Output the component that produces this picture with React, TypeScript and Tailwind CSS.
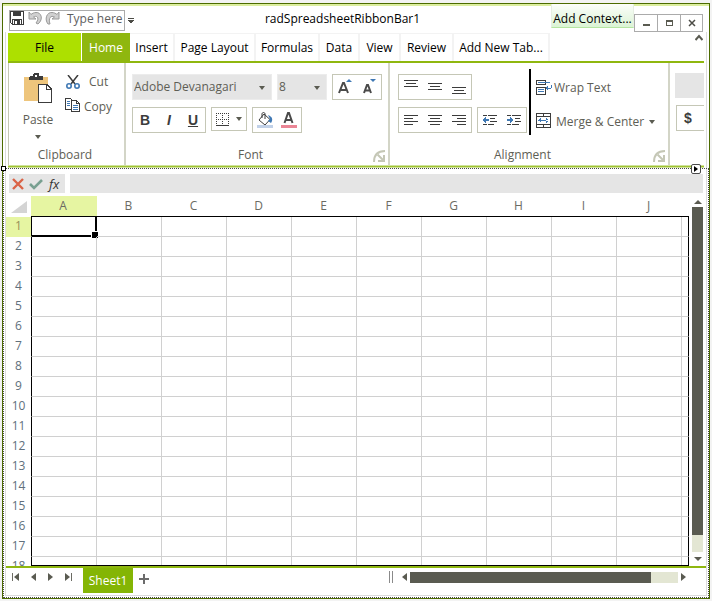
import React from "react";

const COLUMNS = ["A", "B", "C", "D", "E", "F", "G", "H", "I", "J"];
const ROWS = Array.from({ length: 18 }, (_, i) => i + 1);

const TABS = [
  { label: "Insert", width: "w-[45px]" },
  { label: "Page Layout", width: "w-[81px]" },
  { label: "Formulas", width: "w-[64px]" },
  { label: "Data", width: "w-[40px]" },
  { label: "View", width: "w-[41px]" },
  { label: "Review", width: "w-[53px]" },
  { label: "Add New Tab...", width: "w-[96px]" },
];

type ArrowProps = { dir: "up" | "down" | "left" | "right"; size?: "sm" | "md" };

function Arrow({ dir, size = "sm" }: ArrowProps) {
  if (dir === "down" || dir === "up") {
    const w = size === "sm" ? 6 : 8;
    const h = 4;
    const d = dir === "down" ? `M0 0H${w}L${w / 2} ${h}Z` : `M0 ${h}H${w}L${w / 2} 0Z`;
    return (
      <svg width={w} height={h} className="shrink-0" aria-hidden="true">
        <path d={d} fill="#5a5b51" />
      </svg>
    );
  }
  const d = dir === "right" ? "M0 0L5 4L0 8Z" : "M5 0L0 4L5 8Z";
  return (
    <svg width="5" height="8" className="shrink-0" aria-hidden="true">
      <path d={d} fill="#5a5b51" />
    </svg>
  );
}

type LinesProps = { rows: [number, number, number][] };

function Lines({ rows }: LinesProps) {
  return (
    <svg width="14" height="16" shapeRendering="crispEdges" aria-hidden="true">
      {rows.map(([x, y, w]) => (
        <rect key={y} x={x} y={y} width={w} height="1" fill="#3c3c3c" />
      ))}
    </svg>
  );
}

function IconButton({ label, children }: { label: string; children: React.ReactNode }) {
  return (
    <button type="button" aria-label={label} className="flex w-6 items-center justify-center">
      {children}
    </button>
  );
}

function ButtonBox({ children }: { children: React.ReactNode }) {
  return <div className="flex h-[26px] border border-[#c5c7b6] bg-white">{children}</div>;
}

function Combo({ label, value, width }: { label: string; value: string; width: string }) {
  return (
    <div className={`relative h-[26px] ${width}`}>
      <select
        aria-label={label}
        className="h-full w-full appearance-none border border-[#ececec] bg-[#e5e5e5] pl-px text-xs text-[#5e5e55]"
        defaultValue={value}
      >
        <option>{value}</option>
      </select>
      <span className="pointer-events-none absolute right-[7px] top-3">
        <Arrow dir="down" />
      </span>
    </div>
  );
}

function Group({
  title,
  width,
  launcher,
  children,
}: {
  title: string;
  width: string;
  launcher?: boolean;
  children: React.ReactNode;
}) {
  return (
    <section className={`relative flex shrink-0 flex-col border-r-2 border-[#d3d5c7] ${width}`}>
      <div className="flex-1">{children}</div>
      <h2 className={`h-5 text-center leading-5 ${launcher ? "pr-[13px]" : "pr-[3px]"}`}>{title}</h2>
      {launcher && (
        <button type="button" aria-label={`${title} settings`} className="absolute bottom-[2px] right-[2px]">
          <svg width="13" height="13" aria-hidden="true" fill="none" stroke="#c5c7b6" strokeWidth="2">
            <path d="M1 12C1 5 5 1 12 1" />
            <path d="M4.500 4.500L10 10M11 5V11H5" />
          </svg>
        </button>
      )}
    </section>
  );
}

function TitleBar() {
  return (
    <header className="flex h-7 items-start border-t-2 border-[#dcee9f] pl-1.5">
      <div className="mt-1 flex h-[21px] w-[116px] items-start border border-[#ababab]">
        <button type="button" aria-label="Save">
          <svg width="14" height="14" shapeRendering="crispEdges" aria-hidden="true">
            <path d="M0 0H14V14H2L0 12Z" fill="#3c3c3c" />
            <path d="M2 1H12V7H2Z" fill="#fff" />
            <path d="M3 1H11V5H3Z" fill="#3c3c3c" />
            <path d="M1 1H2V12H1ZM12 1H13V13H12ZM1 7H13V8H1ZM3 9H11V13H3Z" fill="#fff" />
            <path d="M4 9H10V13H4Z" fill="#3c3c3c" />
            <path d="M5 10H7V13H5Z" fill="#fff" />
          </svg>
        </button>
        <button type="button" aria-label="Undo" className="pl-1">
          <svg width="15" height="15" aria-hidden="true">
            <path d="M1 1V8H8L5.500 6C9 4 12 7 8 12L10 13C16 8 13 1 8 1.500C6 1.500 4 2.500 3 3.500Z" fill="#d0d0d0" stroke="#9a9a9a" />
          </svg>
        </button>
        <button type="button" aria-label="Redo" className="pl-0.5">
          <svg width="15" height="15" aria-hidden="true">
            <path d="M14 1V8H7L9.500 6C6 4 3 7 5 13L3 13C-1 8 2 1 7 1.500C9 1.500 11 2.500 12 3.500Z" fill="#d0d0d0" stroke="#9a9a9a" />
          </svg>
        </button>
        <span className="pl-[7px] leading-4 text-[#5e5e5e]">Type here</span>
      </div>
      <button type="button" aria-label="Customize toolbar" className="mt-3 pl-[3px]">
        <svg width="6" height="6" shapeRendering="crispEdges" aria-hidden="true">
          <path d="M0 0H6V1H0ZM0 2H6L3 6Z" fill="#4c4c46" />
        </svg>
      </button>
      <h1 className="flex-1 pt-1 text-center leading-[18px] text-black">radSpreadsheetRibbonBar1</h1>
      <button
        type="button"
        className="-mt-0.5 h-6 w-[83px] border-x border-b border-x-[#e6efe2] border-b-[#b5e6a2] bg-linear-to-b from-[#fcfefb] to-[#dbf3d4] pt-1.5 text-center leading-[18px] text-black"
      >
        Add Context...
      </button>
      <div className="mr-1.5 mt-2 flex h-[18px] border border-[#ababab]">
        <button type="button" aria-label="Minimize" className="flex w-[22px] items-center justify-center">
          <svg width="7" height="10" shapeRendering="crispEdges" aria-hidden="true">
            <path d="M0 6H7V8H0Z" fill="#5a5b51" />
          </svg>
        </button>
        <button type="button" aria-label="Maximize" className="flex w-6 items-center justify-center border-x border-[#ababab]">
          <svg width="7" height="6" shapeRendering="crispEdges" aria-hidden="true">
            <path d="M0 0H7V6H0ZM1 2V5H6V2Z" fillRule="evenodd" fill="#5a5b51" />
          </svg>
        </button>
        <button type="button" aria-label="Close" className="flex w-[21px] items-center justify-center">
          <svg width="8" height="8" aria-hidden="true">
            <path d="M1 1L7 7M7 1L1 7" stroke="#4c4c46" strokeWidth="1.500" />
          </svg>
        </button>
      </div>
    </header>
  );
}

function TabStrip() {
  return (
    <nav className="flex h-[31px] border-b-2 border-[#8fb70f] pt-px leading-7 text-black">
      <button type="button" className="mr-px w-[73px] bg-[#ade000] pt-px text-center">
        File
      </button>
      <button type="button" className="w-[48px] bg-[#8fb70f] pt-px text-center text-white">
        Home
      </button>
      {TABS.map((tab) => (
        <button
          key={tab.label}
          type="button"
          className={`whitespace-nowrap border-r-2 border-t border-[#f3f3f3] text-center leading-[27px] ${tab.width}`}
        >
          {tab.label}
        </button>
      ))}
      <button type="button" aria-label="Collapse ribbon" className="ml-auto flex h-2 items-end pr-px">
        <svg width="8" height="7" aria-hidden="true">
          <path d="M0.500 6L4 2L7.500 6" fill="none" stroke="#5a5b51" strokeWidth="2" />
        </svg>
      </button>
    </nav>
  );
}

function ClipboardGroup() {
  return (
    <Group title="Clipboard" width="w-[117px]">
      <div className="flex pt-2.5">
        <button type="button" className="flex w-14 flex-col items-center pl-0.5">
          <svg width="28" height="31" aria-hidden="true" shapeRendering="crispEdges">
            <path d="M0 4H24V28H0Z" fill="#eec57c" />
            <path d="M5 7V4L6 3H9V1L10 0H14L15 1V3H18L19 4V7Z" fill="#3c3c3c" />
            <path d="M11 2H13V4H11Z" fill="#fff" />
            <path d="M14 11H23L28 16V30H14Z" fill="#3c3c3c" />
            <path d="M15 12H22V17H27V29H15ZM23 13V16H26Z" fill="#fff" />
          </svg>
          <span className="pt-[7px] leading-[18px]">Paste</span>
          <span className="flex h-3 items-center pt-1">
            <Arrow dir="down" />
          </span>
        </button>
        <div className="flex flex-col">
          <button type="button" className="flex h-[18px] items-center gap-[9px] pl-px">
            <svg width="14" height="14" aria-hidden="true" fill="none">
              <path d="M2 0L9 9M12 0L5 9" stroke="#3c3c3c" strokeWidth="1.500" />
              <circle cx="3" cy="11" r="2.200" stroke="#3f78b4" strokeWidth="1.600" />
              <circle cx="11" cy="11" r="2.200" stroke="#3f78b4" strokeWidth="1.600" />
            </svg>
            Cut
          </button>
          <button type="button" className="mt-[7px] flex h-[18px] items-center gap-1">
            <svg width="15" height="14" className="mb-1" aria-hidden="true" shapeRendering="crispEdges">
              <path d="M0.500 0.500H5.500L7.500 2.500V11.500H0.500Z" fill="#fff" stroke="#3c3c3c" />
              <path d="M6.500 2.500H11.500L14.500 5.500V13.500H6.500Z" fill="#fff" stroke="#3c3c3c" />
              <path d="M11.500 2.500V5.500H14.500" fill="none" stroke="#3c3c3c" />
              <path d="M2 3H5V4H2ZM2 5H5V6H2ZM2 7H5V8H2ZM8 7H13V8H8ZM8 9H13V10H8ZM8 11H13V12H8Z" fill="#3f78b4" />
            </svg>
            Copy
          </button>
        </div>
      </div>
    </Group>
  );
}

function FontGroup() {
  return (
    <Group title="Font" width="w-[264px]" launcher>
      <div className="flex flex-col gap-[7px] pl-1.5 pt-[11px]">
        <div className="flex gap-[5px]">
          <Combo label="Font family" value="Adobe Devanagari" width="w-[140px]" />
          <Combo label="Font size" value="8" width="w-[50px]" />
          <ButtonBox>
            <IconButton label="Grow font">
              <svg width="14" height="16" aria-hidden="true">
                <path d="M1 14L5 4H6L10 14M3 11H8" fill="none" stroke="#4a4a4a" strokeWidth="2" />
                <path d="M8 3L11 0L14 3Z" fill="#3f78b4" />
              </svg>
            </IconButton>
            <IconButton label="Shrink font">
              <svg width="14" height="16" aria-hidden="true">
                <path d="M2 14L5 6H6L9 14M3 11.500H8" fill="none" stroke="#4a4a4a" strokeWidth="2" />
                <path d="M8 0L11 3L14 0Z" fill="#3f78b4" />
              </svg>
            </IconButton>
          </ButtonBox>
        </div>
        <div className="flex items-start gap-[5px]">
          <div className="flex h-[26px] border border-[#c5c7b6] font-['Liberation_Sans',sans-serif] text-sm font-bold text-[#3c3c3c]">
            <button type="button" className="w-6">B</button>
            <button type="button" className="w-6 italic">I</button>
            <button type="button" className="w-6 underline">U</button>
          </div>
          <button
            type="button"
            aria-label="Borders"
            className="flex h-6 w-9 items-center justify-center gap-[7px] border border-[#c5c7b6]"
          >
            <svg width="13" height="13" aria-hidden="true" shapeRendering="crispEdges">
              <path d="M0 0.500H13M0 6.500H13M0.500 0V12M6.500 0V12M12.500 0V12" stroke="#3c3c3c" strokeDasharray="1 1" />
              <path d="M0 12H13V13H0Z" fill="#3c3c3c" />
            </svg>
            <Arrow dir="down" />
          </button>
          <ButtonBox>
            <IconButton label="Fill color">
              <svg width="16" height="16" aria-hidden="true">
                <path d="M7 2L13 7.500L8 13L2 8Z" fill="#fff" stroke="#3c3c3c" />
                <path d="M5 6V2C5 0 8 0 8 2V7" fill="none" stroke="#3c3c3c" />
                <path d="M11 3C16 5 16 8 14 11L11 9L13 7Z" fill="#3f78b4" />
                <path d="M0 13H16V16H0Z" fill="#c1d1e8" />
              </svg>
            </IconButton>
            <IconButton label="Font color">
              <svg width="16" height="16" aria-hidden="true">
                <path d="M3.500 11L7 1H8L11.500 11M5 8H10" fill="none" stroke="#4a4a4a" strokeWidth="2" />
                <path d="M0 13H16V16H0Z" fill="#ea8595" />
              </svg>
            </IconButton>
          </ButtonBox>
        </div>
      </div>
    </Group>
  );
}

function AlignmentGroup() {
  return (
    <Group title="Alignment" width="w-[280px]" launcher>
      <div className="flex pl-2 pt-1.5">
        <div className="flex flex-col items-start gap-[7px] pt-[5px]">
          <ButtonBox>
            <IconButton label="Align top">
              <Lines rows={[[0, 1, 14], [2, 4, 10], [0, 7, 14]]} />
            </IconButton>
            <IconButton label="Align middle">
              <Lines rows={[[0, 4, 14], [2, 7, 10], [0, 10, 14]]} />
            </IconButton>
            <IconButton label="Align bottom">
              <Lines rows={[[0, 8, 14], [2, 11, 10], [0, 14, 14]]} />
            </IconButton>
          </ButtonBox>
          <div className="flex gap-[5px]">
            <ButtonBox>
              <IconButton label="Align left">
                <Lines rows={[[0, 3, 14], [0, 6, 9], [0, 9, 14], [0, 12, 9]]} />
              </IconButton>
              <IconButton label="Align center">
                <Lines rows={[[0, 3, 14], [2, 6, 10], [0, 9, 14], [2, 12, 10]]} />
              </IconButton>
              <IconButton label="Align right">
                <Lines rows={[[0, 3, 14], [5, 6, 9], [0, 9, 14], [5, 12, 9]]} />
              </IconButton>
            </ButtonBox>
            <ButtonBox>
              <IconButton label="Decrease indent">
                <svg width="14" height="16" shapeRendering="crispEdges" aria-hidden="true">
                  <path d="M0 3H4V4H0ZM5 3H14V4H5ZM7 6H12V7H7ZM7 9H14V10H7ZM0 12H4V13H0ZM5 12H11V13H5Z" fill="#3c3c3c" />
                  <path d="M0 8L3 4V7H6V9H3V12Z" fill="#3f78b4" />
                </svg>
              </IconButton>
              <IconButton label="Increase indent">
                <svg width="14" height="16" shapeRendering="crispEdges" aria-hidden="true">
                  <path d="M0 3H4V4H0ZM5 3H14V4H5ZM8 6H13V7H8ZM8 9H14V10H8ZM0 12H4V13H0ZM5 12H12V13H5Z" fill="#3c3c3c" />
                  <path d="M6 8L3 4V7H0V9H3V12Z" fill="#3f78b4" />
                </svg>
              </IconButton>
            </ButtonBox>
          </div>
        </div>
        <div className="ml-0.5 flex h-[66px] flex-col items-start gap-4 whitespace-nowrap border-l-2 border-black pl-[5px] pt-2.5">
          <button type="button" className="flex h-[18px] items-center gap-0.5">
            <svg width="16" height="16" shapeRendering="crispEdges" aria-hidden="true">
              <path d="M0.500 0.500H9.500V4.500H0.500ZM0.500 7.500H9.500V14.500H0.500Z" fill="#fff" stroke="#3c3c3c" />
              <path d="M2 2H14V3H2ZM2 9H8V10H2ZM2 11H8V12H2ZM15 5H16V8H15ZM11 8H15V9H11ZM9 8L12 5V11Z" fill="#3f78b4" />
            </svg>
            Wrap Text
          </button>
          <button type="button" className="flex h-[18px] items-center gap-[5px]">
            <svg width="15" height="15" className="mb-1" shapeRendering="crispEdges" aria-hidden="true" fill="none">
              <path d="M0.500 0.500H14.500V14.500H0.500ZM0 3.500H15M0 11.500H15M7.500 0V4M7.500 11V15" stroke="#3c3c3c" />
              <path d="M2 7H13V8H2ZM2 7L5 5V10ZM13 7L10 5V10Z" fill="#3f78b4" />
            </svg>
            Merge &amp; Center
            <Arrow dir="down" />
          </button>
        </div>
      </div>
    </Group>
  );
}

function NumberGroup() {
  return (
    <section className="min-w-0 flex-1 overflow-hidden pl-[5px] pt-2.5">
      <div className="h-[25px] bg-[#e5e5e5]" />
      <button
        type="button"
        aria-label="Accounting format"
        className="ml-px mt-[7px] flex h-[26px] w-full border border-r-0 border-[#c5c7b6] pl-[7px] font-['Liberation_Sans',sans-serif] text-sm font-bold leading-6 text-[#3c3c3c]"
      >
        $
      </button>
    </section>
  );
}

function FormulaBar() {
  return (
    <div className="ml-[3px] mr-[3px] mt-1.5 flex h-[19px] gap-[5px]">
      <div className="flex w-14 items-center bg-[#e5e5e5] pl-[3px]">
        <button type="button" aria-label="Cancel">
          <svg width="12" height="12" aria-hidden="true">
            <path d="M1 1L11 11M11 1L1 11" stroke="#da6346" strokeWidth="2.400" />
          </svg>
        </button>
        <button type="button" aria-label="Enter" className="pl-[5px]">
          <svg width="14" height="12" aria-hidden="true">
            <path d="M1 6L5 10L13 2" fill="none" stroke="#78a091" strokeWidth="2.600" />
          </svg>
        </button>
        <button type="button" aria-label="Insert function" className="pl-1.5 text-[13px] italic leading-4 text-[#333333]">
          fx
        </button>
      </div>
      <input aria-label="Formula" className="min-w-0 flex-1 bg-[#e5e5e5] px-1 outline-none" />
    </div>
  );
}

function Sheet() {
  return (
    <div className="mt-[3px] flex min-h-0 flex-1">
      <div className="relative min-w-0 flex-1 overflow-hidden">
        <table className="w-full table-fixed border-separate border-spacing-0 text-[#6b6b63]">
          <colgroup>
            <col className="w-[25px]" />
            {COLUMNS.map((c) => (
              <col key={c} className={c === "A" ? "w-[66px]" : "w-[65px]"} />
            ))}
            <col />
          </colgroup>
          <thead>
            <tr className="h-[21px]">
              <th aria-label="Select all" className="p-0 align-bottom">
                <svg width="16" height="12" className="mb-1 ml-[5px]" aria-hidden="true">
                  <path d="M16 0V12H0Z" fill="#d4d4d4" />
                </svg>
              </th>
              {COLUMNS.map((c) => (
                <th
                  key={c}
                  scope="col"
                  className={`border-b border-black p-0 pr-0.5 font-normal leading-5 ${c === "A" ? "bg-[#e6f5a2]" : ""}`}
                >
                  {c}
                </th>
              ))}
              <th aria-label="Next column" className="border-b border-black p-0" />
            </tr>
          </thead>
          <tbody>
            {ROWS.map((r) => (
              <tr key={r} className="h-5">
                <th
                  scope="row"
                  className={`p-0 align-top font-normal leading-[17px] ${
                    r === 1 ? "bg-[#e6f5a2] text-[#96905a]" : "text-[#61707c]"
                  }`}
                >
                  {r}
                </th>
                {COLUMNS.map((c) => (
                  <td
                    key={c}
                    className={`relative border-b border-r border-[#d0d0d0] p-0 ${
                      c === "A" ? "border-l border-l-black" : ""
                    }`}
                  >
                    {r === 1 && c === "A" && (
                      <span className="absolute -bottom-px -right-px left-0 top-0 border-b-2 border-r-2 border-black">
                        <span className="absolute -bottom-1 -right-1 h-2 w-2 border border-white bg-black" />
                      </span>
                    )}
                  </td>
                ))}
                <td className="border-b border-r border-b-[#d0d0d0] border-r-black p-0" />
              </tr>
            ))}
          </tbody>
        </table>
        <div className="absolute bottom-0 left-[25px] right-0 h-px bg-black" />
      </div>
      <div className="ml-[3px] mr-[3px] flex w-[11px] flex-col items-center">
        <button type="button" aria-label="Scroll up" className="flex h-[11px] items-center justify-center">
          <Arrow dir="up" size="md" />
        </button>
        <div className="flex w-full flex-1 flex-col bg-[#e3e6d3]">
          <div className="h-[95%] bg-[#5a5b51]" />
        </div>
        <button type="button" aria-label="Scroll down" className="flex h-[14px] items-center justify-center">
          <Arrow dir="down" size="md" />
        </button>
      </div>
    </div>
  );
}

function SheetBar() {
  return (
    <footer className="flex h-[29px] items-start border-t-2 border-[#8fb70f]">
      <div className="flex items-center gap-3 pl-1.5 pt-[5px]">
        <button type="button" aria-label="First sheet" className="flex">
          <span className="mr-px h-2 w-px bg-[#6b6b63]" />
          <Arrow dir="left" />
        </button>
        <button type="button" aria-label="Previous sheet">
          <Arrow dir="left" />
        </button>
        <button type="button" aria-label="Next sheet">
          <Arrow dir="right" />
        </button>
        <button type="button" aria-label="Last sheet" className="flex">
          <Arrow dir="right" />
          <span className="ml-px h-2 w-px bg-[#6b6b63]" />
        </button>
      </div>
      <button type="button" className="ml-[11px] h-[25px] w-[50px] bg-[#84b504] text-center leading-6 text-white">
        Sheet1
      </button>
      <button type="button" aria-label="Add sheet" className="pl-1.5 pt-1.5">
        <svg width="10" height="10" shapeRendering="crispEdges" aria-hidden="true">
          <path d="M4 0H6V10H4ZM0 4H10V6H0Z" fill="#6b6b6b" />
        </svg>
      </button>
      <div className="ml-auto flex items-center pr-5 pt-[3px]">
        <span className="mr-[9px] h-3 w-1 border-x border-[#8a8a8a]" />
        <button type="button" aria-label="Scroll left">
          <Arrow dir="left" />
        </button>
        <div className="mx-[3px] flex h-[11px] w-[268px] bg-[#e3e6d3]">
          <div className="w-[90%] bg-[#5a5b51]" />
        </div>
        <button type="button" aria-label="Scroll right">
          <Arrow dir="right" />
        </button>
      </div>
    </footer>
  );
}

export default function App() {
  return (
    <div className="flex h-screen flex-col bg-[#f3f3f3] pb-0.5 pl-0.5 pr-0.5 pt-[3px] font-['Open_Sans','Noto_Sans',sans-serif] text-xs text-[#5e5e55]">
      <main className="flex min-h-0 flex-1 flex-col border border-[#4c6b00] bg-white">
        <TitleBar />
        <div className="relative mx-0.5 mb-0.5 flex min-h-0 flex-1 flex-col border-x border-b border-[#dcdcdc]">
          <div className="mx-0.5">
            <TabStrip />
            <div className="flex h-[102px] overflow-hidden border-l border-[#c5c7b6]">
              <ClipboardGroup />
              <FontGroup />
              <AlignmentGroup />
              <NumberGroup />
            </div>
            <div className="h-[3px] border-y border-[#cfe29b] bg-[#9fc22f]" />
          </div>
          <FormulaBar />
          <Sheet />
          <SheetBar />
          <div className="pointer-events-none absolute -bottom-[3px] -left-[3px] -right-[3px] top-[136px] border border-dotted border-[#4a4a4a]">
            <span className="absolute -left-[3px] -top-[3px] h-[5px] w-[5px] border border-black bg-white" />
            <span className="absolute -top-[5px] right-[7px] flex h-2.5 w-2.5 items-center justify-center rounded-[2px] border border-[#4a4a4a] bg-white">
              <svg width="4" height="6" aria-hidden="true">
                <path d="M0 0L4 3L0 6Z" fill="#000" />
              </svg>
            </span>
          </div>
        </div>
      </main>
    </div>
  );
}
